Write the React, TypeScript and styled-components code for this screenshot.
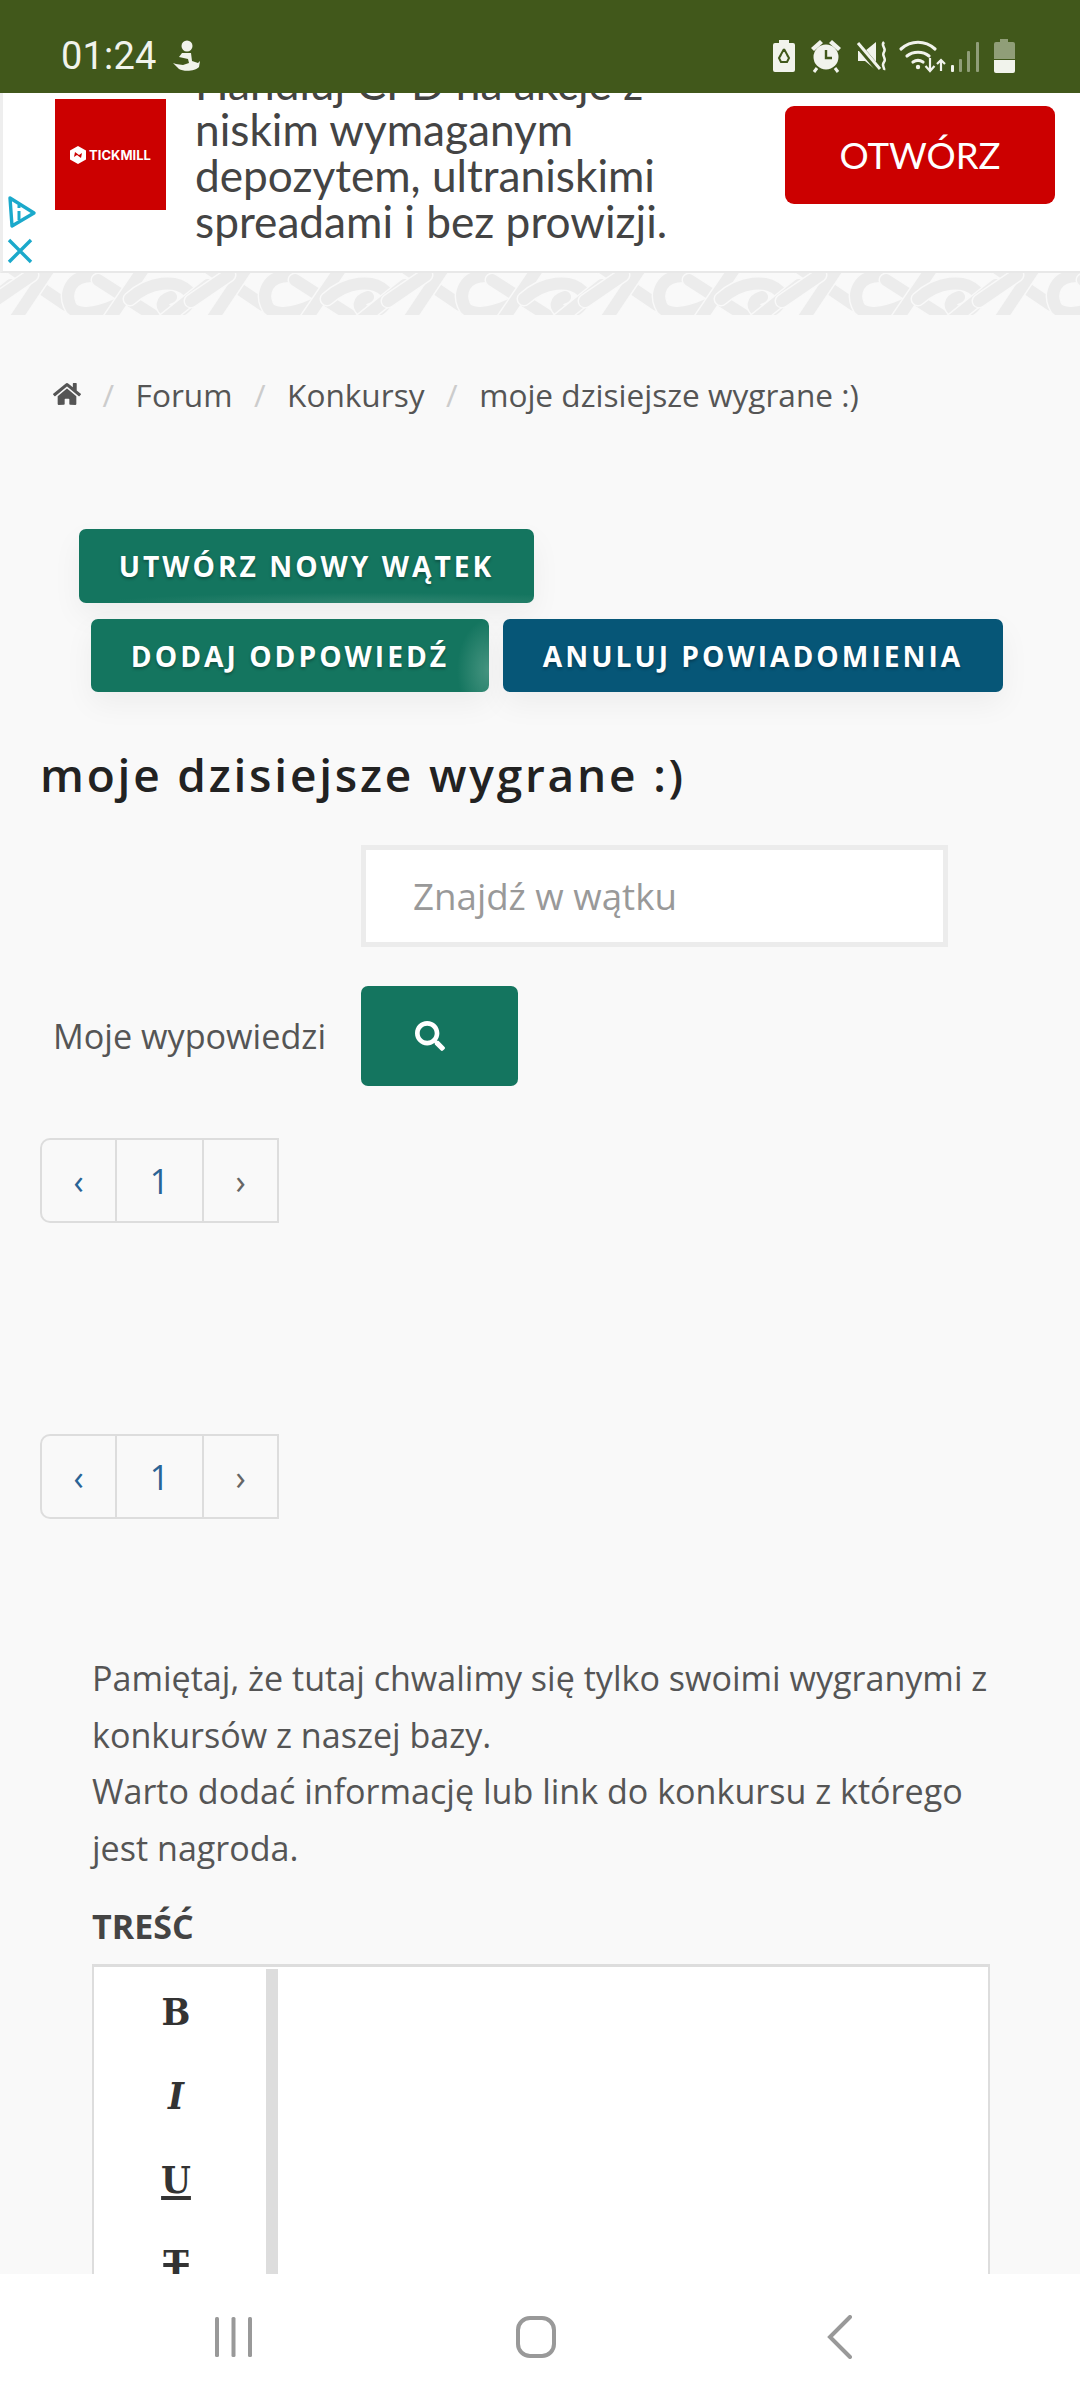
import React from 'react';
import styled, { createGlobalStyle } from 'styled-components';
import { FaHome, FaSearch } from 'react-icons/fa';

const GlobalStyle = createGlobalStyle`
    html, body {
        margin: 0;
        padding: 0;
        background: #f9f9f9;
    }
    * {
        box-sizing: border-box;
    }
`;

const Screen = styled.div`
    width: 1080px;
    height: 2400px;
    display: flex;
    flex-direction: column;
    overflow: hidden;
    background: #f9f9f9;
    font-family: 'Open Sans', sans-serif;
    color: #555;
`;

const StatusBar = styled.div`
    flex: 0 0 93px;
    background: #41581b;
    display: flex;
    align-items: center;
    justify-content: space-between;
    padding: 18px 63px 0 61px;
    color: #f1f3ec;
`;

const StatusLeft = styled.div`
    display: flex;
    align-items: center;
    gap: 15px;
    font-family: Roboto, sans-serif;
    font-size: 38px;
    letter-spacing: 0.2px;
`;

const StatusRight = styled.div`
    display: flex;
    align-items: center;
`;

const Ad = styled.div`
    flex: 0 0 180px;
    background: #fff;
    border-left: 3px solid #eee;
    border-bottom: 2px solid #e8e8e8;
    display: flex;
    overflow: hidden;
`;

const AdMarks = styled.div`
    flex: 0 0 52px;
    display: flex;
    flex-direction: column;
    justify-content: flex-end;
    align-items: flex-start;
    gap: 8px;
    padding: 0 0 7px 4px;
`;

const AdLogo = styled.div`
    flex: 0 0 111px;
    height: 111px;
    margin-top: 6px;
    background: #cc0000;
    display: flex;
    align-items: center;
    justify-content: center;
    gap: 3px;
    color: #fff;
    font-family: Inter, sans-serif;
    font-weight: 700;
    font-size: 13px;
`;

const AdCopy = styled.div`
    flex: 0 0 590px;
    align-self: flex-end;
    margin: 0 0 27px 29px;
    font-family: Lato, sans-serif;
    font-size: 44.2px;
    line-height: 46px;
    color: #444;
    white-space: nowrap;
`;

const AdButton = styled.div`
    width: 270px;
    height: 98px;
    margin-top: 13px;
    background: #cc0000;
    border-radius: 9px;
    color: #fff;
    display: flex;
    align-items: center;
    justify-content: center;
    font-family: Lato, sans-serif;
    font-size: 36.5px;
`;

const Border = styled.svg`
    flex: 0 0 42px;
    display: block;
    width: 1080px;
`;

const Main = styled.div`
    flex: 1;
    min-height: 0;
    overflow: hidden;
`;

const Breadcrumb = styled.div`
    display: flex;
    align-items: center;
    height: 60px;
    margin: 49px 0 0 53px;
    font-size: 31.6px;
    color: #555;
`;

const Crumb = styled.span`
    white-space: nowrap;
`;

const Slash = styled.span`
    color: #ccc;
    margin: 0 21.5px;
`;

const ButtonRow = styled.div<{ $left: number; $top: number }>`
    display: flex;
    gap: 14px;
    margin: ${(p) => p.$top}px 0 0 ${(p) => p.$left}px;
`;

const ActionButton = styled.div<{ $color: string; $width: number; $shine?: 'bottom' | 'right' }>`
    width: ${(p) => p.$width}px;
    height: ${(p) => (p.$shine === 'bottom' ? 74 : 73)}px;
    border-radius: 7px;
    display: flex;
    align-items: center;
    justify-content: center;
    font-size: 28.2px;
    font-weight: 700;
    letter-spacing: 3px;
    color: #fff;
    white-space: nowrap;
    text-shadow: 0 2px 3px rgba(0, 0, 0, 0.3);
    box-shadow: 0 12px 30px rgba(0, 0, 0, 0.05);
    background: ${(p) =>
        p.$shine === 'bottom'
            ? `radial-gradient(ellipse 60% 14% at 65% 100%, #2f8570 0%, transparent 100%), ${p.$color}`
            : p.$shine === 'right'
              ? `radial-gradient(ellipse 8% 70% at 100% 70%, #479581 0%, transparent 100%), ${p.$color}`
              : p.$color};
`;

const Title = styled.h1`
    margin: 47px 0 0 40px;
    font-size: 46px;
    line-height: 70px;
    font-weight: 600;
    letter-spacing: 2.8px;
    color: #222;
`;

const SearchInput = styled.div`
    width: 587px;
    height: 102px;
    margin: 36px 0 0 361px;
    background: #fff;
    border: 5px solid #ececec;
    display: flex;
    align-items: center;
    padding-left: 47px;
    font-size: 36.7px;
    color: #999;
`;

const SearchRow = styled.div`
    display: flex;
    align-items: center;
    margin: 39px 0 0 53px;
`;

const SearchLabel = styled.span`
    width: 308px;
    font-size: 34.2px;
    color: #555;
    margin-top: -2px;
`;

const SearchButton = styled.div`
    width: 157px;
    height: 100px;
    background: #14755f;
    border-radius: 7px;
    color: #fff;
    display: flex;
    align-items: center;
    padding-left: 54px;
    font-size: 30px;
`;

const Pagination = styled.div<{ $top: number }>`
    display: flex;
    width: 239px;
    height: 85px;
    margin: ${(p) => p.$top}px 0 0 40px;
    border: 2px solid #ddd;
    border-radius: 10px 0 0 10px;
`;

const PageCell = styled.div<{ $width: number; $color: string; $size: number }>`
    width: ${(p) => p.$width}px;
    display: flex;
    align-items: center;
    justify-content: center;
    color: ${(p) => p.$color};
    font-size: ${(p) => p.$size}px;
    & + & {
        border-left: 2px solid #ddd;
    }
`;

const Notice = styled.p`
    margin: 131px 0 0 92px;
    width: 930px;
    font-size: 34.1px;
    line-height: 56.6px;
    color: #555;
    white-space: nowrap;
`;

const FieldLabel = styled.div`
    margin: 28px 0 0 92px;
    font-size: 34px;
    line-height: 44px;
    font-weight: 700;
    color: #444;
`;

const Editor = styled.div`
    display: flex;
    width: 898px;
    height: 400px;
    margin: 16px 0 0 92px;
    background: #fff;
    border: 2px solid #ddd;
    border-top-width: 3px;
`;

const EditorTools = styled.div`
    flex: 0 0 172px;
    display: flex;
    flex-direction: column;
    align-items: center;
    padding: 2px 8px 0 0;
    color: #333;
    font-family: 'DejaVu Serif Condensed', 'DejaVu Serif', serif;
    font-size: 38px;
    font-weight: 700;
`;

const Tool = styled.div<{ $kind?: 'italic' | 'underline' | 'strike' }>`
    height: 84px;
    display: flex;
    align-items: center;
    font-style: ${(p) => (p.$kind === 'italic' ? 'italic' : 'normal')};
    text-decoration: ${(p) =>
        p.$kind === 'underline' ? 'underline' : p.$kind === 'strike' ? 'line-through' : 'none'};
    text-decoration-thickness: 4px;
    text-underline-offset: 3px;
`;

const EditorDivider = styled.div`
    flex: 0 0 12px;
    margin-top: 2px;
    background: #ddd;
`;

const NavBar = styled.div`
    flex: 0 0 126px;
    background: #fff;
    display: flex;
    align-items: center;
`;

const NavSlot = styled.div<{ $left: number }>`
    margin-left: ${(p) => p.$left}px;
    display: flex;
`;

const knotBands = [
    'M10 -6 L66 32',
    'M50 -6 L14 48',
    'M-6 28 L32 2',
    'M92 3 C70 3 65 20 70 32 C74 44 96 41 116 32',
    'M98 7 L162 48',
    'M142 -2 L108 48',
    'M130 26 C150 8 176 6 188 18 C195 30 180 43 168 38 C160 35 161 27 171 24',
    'M163 48 L208 12',
];

const KnotTile = ({ shift }: { shift: number }) => (
    <g transform={`translate(${shift} 0)`} fill="none" strokeLinecap="round">
        {knotBands.map((d) => (
            <g key={d}>
                <path d={d} stroke="#f9f9f9" strokeWidth="15" />
                <path d={d} stroke="#ececec" strokeWidth="12" />
            </g>
        ))}
    </g>
);

const BorderPattern = () => (
    <Border viewBox="0 0 1080 42">
        <defs>
            <pattern id="knot" width="197" height="42" patternUnits="userSpaceOnUse">
                <KnotTile shift={-197} />
                <KnotTile shift={0} />
                <KnotTile shift={197} />
            </pattern>
        </defs>
        <rect width="1080" height="42" fill="#f9f9f9" />
        <rect width="1080" height="42" fill="url(#knot)" />
    </Border>
);

const StatusIcons = () => (
    <svg width="244" height="36" viewBox="0 0 244 36" fill="#f1f3ec">
        {/* battery saver */}
        <path d="M6 2h10v3h4a2 2 0 0 1 2 2v25a2 2 0 0 1-2 2H2a2 2 0 0 1-2-2V7a2 2 0 0 1 2-2h4z" />
        <path
            d="M11 11l-5 9 2 4h3M11 11l5 9-2 4h-3M8 17l-2 3M14 17l2 3"
            fill="none"
            stroke="#41581b"
            strokeWidth="2"
        />
        {/* alarm */}
        <circle cx="53" cy="19" r="12.5" />
        <path d="M56 5l3-3 9 8-3 3zM50 5l-3-3-9 8 3 3z" />
        <path d="M44 30l-3 4M62 30l3 4" stroke="#f1f3ec" strokeWidth="3" />
        <path d="M53 12v8h6" fill="none" stroke="#41581b" strokeWidth="2.4" />
        {/* mute */}
        <path d="M85 13h7l11-9v28l-11-9h-7z" />
        <path d="M84 6l22 26" stroke="#41581b" strokeWidth="6" />
        <path d="M85 5l22 26" stroke="#f1f3ec" strokeWidth="3" />
        <path d="M111 4c-4 4 3 6 0 10s3 6 0 10 1 5 0 8" fill="none" stroke="#f1f3ec" strokeWidth="2.5" />
        {/* wifi */}
        <g fill="none" stroke="#f1f3ec" strokeWidth="3.2" strokeLinecap="round">
            <path d="M128 11c10-9 24-9 34 0" />
            <path d="M134 18c6-5 16-5 22 0" />
            <path d="M140 24c3-2 7-2 10 0" />
        </g>
        <circle cx="145" cy="29" r="2.2" />
        <path d="M157 20v13M152.500 28l4.500 5 4.500-5M168 33V22M164 26l4-4 4 4" fill="none" stroke="#f1f3ec" strokeWidth="2.2" />
        {/* signal */}
        <rect x="178" y="27" width="3" height="7" rx="1" />
        <g opacity="0.45">
            <rect x="186" y="21" width="3" height="13" rx="1" />
            <rect x="194" y="13" width="3" height="21" rx="1" />
            <rect x="203" y="4" width="3" height="30" rx="1" />
        </g>
        {/* battery */}
        <path opacity="0.45" d="M227 1h8v3h5a2 2 0 0 1 2 2v15h-21V6a2 2 0 0 1 2-2h4z" />
        <path d="M221 22h21v11a2 2 0 0 1-2 2h-17a2 2 0 0 1-2-2z" />
    </svg>
);

const App = () => {
    return (
        <Screen>
            <GlobalStyle />
            <StatusBar>
                <StatusLeft>
                    01:24
                    <svg width="28" height="32" viewBox="0 0 28 32" fill="#f1f3ec">
                        <circle cx="15" cy="6" r="5.500" />
                        <path d="M10 13h9l1 8 6 2 2-2-1 6c-3 4-15 5-20 2l-6-6 3 1 7 1 6-2-1-4-9-2z" />
                    </svg>
                </StatusLeft>
                <StatusRight>
                    <StatusIcons />
                </StatusRight>
            </StatusBar>
            <Ad>
                <AdMarks>
                    <svg width="30" height="34" viewBox="0 0 30 34" fill="none" stroke="#1ba9cb" strokeWidth="3.4">
                        <path d="M3 2l24 15L5 30z" strokeLinejoin="round" />
                        <path d="M12 15v9M12 9v3" strokeWidth="3" />
                    </svg>
                    <svg width="26" height="26" viewBox="0 0 26 26" fill="none" stroke="#1ba9cb" strokeWidth="3.4">
                        <path d="M2 2l22 22M24 2L2 24" />
                    </svg>
                </AdMarks>
                <AdLogo>
                    <svg width="16" height="18" viewBox="0 0 16 18" fill="#fff">
                        <path d="M8 0l8 4.500v9L8 18l-8-4.500v-9zM5 6l-1 5 3-2 4 3 1-5-3 2z" fillRule="evenodd" />
                    </svg>
                    TICKMILL
                </AdLogo>
                <AdCopy>
                    Handluj CFD na akcje z
                    <br />
                    niskim wymaganym
                    <br />
                    depozytem, ultraniskimi
                    <br />
                    spreadami i bez prowizji.
                </AdCopy>
                <AdButton>OTWÓRZ</AdButton>
            </Ad>
            <BorderPattern />
            <Main>
                <Breadcrumb>
                    <FaHome size={28} />
                    <Slash>/</Slash>
                    <Crumb>Forum</Crumb>
                    <Slash>/</Slash>
                    <Crumb>Konkursy</Crumb>
                    <Slash>/</Slash>
                    <Crumb>moje dzisiejsze wygrane :)</Crumb>
                </Breadcrumb>
                <ButtonRow $left={79} $top={105}>
                    <ActionButton $color="#14755f" $width={455} $shine="bottom">
                        UTWÓRZ NOWY WĄTEK
                    </ActionButton>
                </ButtonRow>
                <ButtonRow $left={91} $top={16}>
                    <ActionButton $color="#14755f" $width={398} $shine="right">
                        DODAJ ODPOWIEDŹ
                    </ActionButton>
                    <ActionButton $color="#065677" $width={500}>
                        ANULUJ POWIADOMIENIA
                    </ActionButton>
                </ButtonRow>
                <Title>moje dzisiejsze wygrane :)</Title>
                <SearchInput>Znajdź w wątku</SearchInput>
                <SearchRow>
                    <SearchLabel>Moje wypowiedzi</SearchLabel>
                    <SearchButton>
                        <FaSearch />
                    </SearchButton>
                </SearchRow>
                <Pagination $top={52}>
                    <PageCell $width={73} $color="#2a6496" $size={34}>‹</PageCell>
                    <PageCell $width={87} $color="#2a6496" $size={34}>1</PageCell>
                    <PageCell $width={75} $color="#666" $size={34}>›</PageCell>
                </Pagination>
                <Pagination $top={211}>
                    <PageCell $width={73} $color="#2a6496" $size={34}>‹</PageCell>
                    <PageCell $width={87} $color="#2a6496" $size={34}>1</PageCell>
                    <PageCell $width={75} $color="#666" $size={34}>›</PageCell>
                </Pagination>
                <Notice>
                    Pamiętaj, że tutaj chwalimy się tylko swoimi wygranymi z
                    <br />
                    konkursów z naszej bazy.
                    <br />
                    Warto dodać informację lub link do konkursu z którego
                    <br />
                    jest nagroda.
                </Notice>
                <FieldLabel>TREŚĆ</FieldLabel>
                <Editor>
                    <EditorTools>
                        <Tool>B</Tool>
                        <Tool $kind="italic">I</Tool>
                        <Tool $kind="underline">U</Tool>
                        <Tool $kind="strike">T</Tool>
                    </EditorTools>
                    <EditorDivider />
                </Editor>
            </Main>
            <NavBar>
                <NavSlot $left={214}>
                    <svg width="40" height="42" viewBox="0 0 40 42" fill="#999">
                        <rect x="1" y="1" width="4" height="40" rx="1.500" />
                        <rect x="17.500" y="1" width="4" height="40" rx="1.500" />
                        <rect x="34" y="1" width="4" height="40" rx="1.500" />
                    </svg>
                </NavSlot>
                <NavSlot $left={261}>
                    <svg width="42" height="42" viewBox="0 0 42 42" fill="none" stroke="#999" strokeWidth="4">
                        <rect x="3" y="2" width="36" height="38" rx="12" />
                    </svg>
                </NavSlot>
                <NavSlot $left={270}>
                    <svg width="26" height="44" viewBox="0 0 26 44" fill="none" stroke="#999" strokeWidth="4" strokeLinecap="round">
                        <path d="M23 2L3 22l20 20" />
                    </svg>
                </NavSlot>
            </NavBar>
        </Screen>
    );
};

export default App;
